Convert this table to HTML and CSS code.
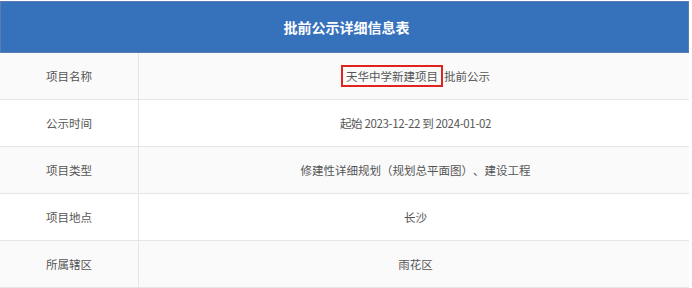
FILE: index.html
```html
<!DOCTYPE html>
<html lang="zh-CN">
<head>
<meta charset="utf-8">
<title>批前公示详细信息表</title>
<link rel="stylesheet" href="styles.css">
</head>
<body>
<div class="sheet">
  <div class="sheet-title">批前公示详细信息表</div>
  <div class="row odd">
    <div class="label">项目名称</div>
    <div class="value"><span class="mark">天华中学新建项目</span> 批前公示</div>
  </div>
  <div class="row">
    <div class="label">公示时间</div>
    <div class="value date">起始 2023-12-22 到 2024-01-02</div>
  </div>
  <div class="row odd">
    <div class="label">项目类型</div>
    <div class="value">修建性详细规划<span class="paren">（</span>规划总平面图<span class="paren">）</span>、建设工程</div>
  </div>
  <div class="row">
    <div class="label">项目地点</div>
    <div class="value">长沙</div>
  </div>
  <div class="row odd">
    <div class="label">所属辖区</div>
    <div class="value">雨花区</div>
  </div>
</div>
</body>
</html>
```
FILE: styles.css
```css
html, body {
  margin: 0;
  padding: 0;
  background: #ffffff;
}
body {
  font-family: "Noto Sans CJK SC", "Microsoft YaHei", sans-serif;
  font-size: 11.5px;
  color: #555555;
}
.sheet {
  width: 689px;
  padding-top: 1px;
}
.sheet-title {
  height: 50px;
  background: #3671bc;
  border: 1px solid #5a7cae;
  color: #ffffff;
  font-size: 14px;
  font-weight: bold;
  display: flex;
  align-items: center;
  justify-content: center;
  padding-left: 4px;
}
.row {
  display: grid;
  grid-template-columns: 139px 1fr;
  height: 47px;
  box-sizing: border-box;
  border-bottom: 1px solid #e5e5e5;
  background: #ffffff;
}
.row.odd {
  background: #fafafa;
}
.label, .value {
  display: flex;
  align-items: center;
  justify-content: center;
}
.label {
  border-right: 1px solid #e5e5e5;
}
.value {
  padding-left: 3px;
}
.date {
  letter-spacing: -0.35px;
}
.paren {
  font-family: "Noto Sans CJK TC", "Noto Sans CJK SC", sans-serif;
}
.mark {
  display: inline-block;
  border: 2px solid #e3231f;
  padding: 1px 3px;
  line-height: 16px;
  margin-right: 1px;
}
```
